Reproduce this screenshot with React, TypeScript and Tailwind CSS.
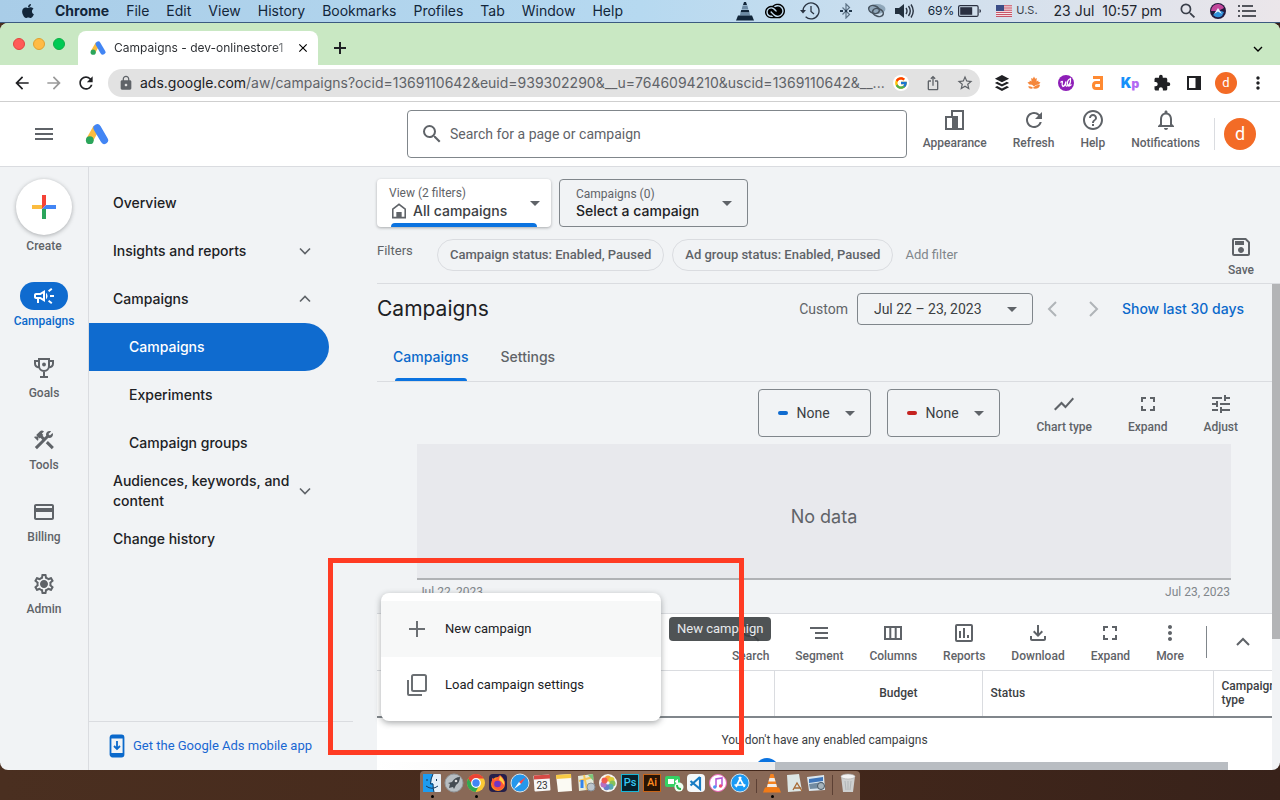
import type { ReactNode } from 'react';
import {
  MdArrowBack,
  MdArrowDropDown,
  MdArrowForward,
  MdClose,
  MdConstruction,
  MdCreditCard,
  MdExtension,
  MdHelpOutline,
  MdIosShare,
  MdLock,
  MdMenu,
  MdMoreVert,
  MdNotificationsNone,
  MdOutlineCampaign,
  MdOutlineFileDownload,
  MdOutlineSave,
  MdOutlineSettings,
  MdRefresh,
  MdSearch,
  MdShowChart,
  MdStarBorder,
  MdTune,
} from 'react-icons/md';
import { FaApple } from 'react-icons/fa';
import { SiAdobecreativecloud, SiBuffer } from 'react-icons/si';
import { FcGoogle } from 'react-icons/fc';

function AdsLogo({ className }: { className: string }) {
  return (
    <svg viewBox="0 0 24 24" className={className} aria-hidden="true">
      <path d="M11.600 5.500 4.600 18" stroke="#fbbc3f" strokeWidth="7" />
      <path d="M12.200 6 19.300 18.200" stroke="#4285f4" strokeWidth="7.600" strokeLinecap="round" />
      <circle cx="4.800" cy="18.200" r="3.900" fill="#2ba55b" />
    </svg>
  );
}

function Chevron({ dir, className }: { dir: 'up' | 'down' | 'left' | 'right'; className: string }) {
  const d = { up: 'M6 15l6-6 6 6', down: 'M6 9l6 6 6-6', left: 'M15 5l-7 7 7 7', right: 'M9 5l7 7-7 7' }[dir];
  return (
    <svg viewBox="0 0 24 24" className={className} fill="none" stroke="currentColor" strokeWidth="2" aria-hidden="true">
      <path d={d} />
    </svg>
  );
}

function ExpandIcon() {
  return (
    <svg viewBox="0 0 24 24" className="size-6" fill="none" stroke="currentColor" strokeWidth="2" aria-hidden="true">
      <path d="M6 10V6h4M14 6h4v4M18 14v4h-4M10 18H6v-4" />
    </svg>
  );
}

function TrophyIcon({ className }: { className: string }) {
  return (
    <svg viewBox="0 0 24 24" className={className} fill="none" stroke="currentColor" strokeWidth="2" aria-hidden="true">
      <path d="M7 3h10v7a5 5 0 0 1-10 0zM7 5H3v2.500Q3 11 7.500 11.500M17 5h4v2.500Q21 11 16.500 11.500M12 15v6M8 21h8" />
      <circle cx="12" cy="8.500" r="1.900" fill="currentColor" stroke="none" />
    </svg>
  );
}

function GearIcon({ className }: { className: string }) {
  return (
    <svg viewBox="0 0 24 24" className={className} aria-hidden="true">
      <MdOutlineSettings size={24} />
      <circle cx="12" cy="12" r="3.200" fill="currentColor" />
    </svg>
  );
}

function Tool({ label, children }: { label: string; children: ReactNode }) {
  return (
    <button type="button" className="flex flex-col items-center gap-[3px] text-xs leading-4 font-medium text-[#5f6368]">
      {children}
      <span>{label}</span>
    </button>
  );
}

function MenuBar() {
  const menus = ['File', 'Edit', 'View', 'History', 'Bookmarks', 'Profiles', 'Tab', 'Window', 'Help'];
  return (
    <header className="flex h-[23px] shrink-0 items-center justify-between border-b border-[#3b5a80] bg-linear-to-r from-[#a9cde8] via-[#b6d9f0] via-50% to-[#ebe6ea] font-[Inter,sans-serif] text-sm text-[#12263a]">
      <nav className="flex items-center gap-[17px] pl-5" aria-label="System menu">
        <FaApple className="mr-0.5 size-4" />
        <button type="button" className="font-bold">Chrome</button>
        {menus.map((m) => (
          <button type="button" key={m}>{m}</button>
        ))}
      </nav>
      <div className="flex items-center pr-6">
        <span className="flex w-[30px] justify-center">
          <svg viewBox="0 0 18 20" className="h-5 w-[18px]" fill="#12263a" aria-hidden="true">
            <path d="M8 1h2l1 3H7z" />
            <path d="M6.600 4.500h4.800l1 4H5.600z" fill="#6d8ba5" />
            <path d="M5.200 9h7.600l.6 2.500H4.600z" />
            <path d="M4.600 11.500h8.800l.8 3H3.800z" fill="#6d8ba5" />
            <path d="M2 14.500h14l2 5H0z" />
          </svg>
        </span>
        <span className="flex w-[30px] justify-center"><SiAdobecreativecloud className="size-5 text-black" /></span>
        <span className="flex w-10 justify-center">
          <svg viewBox="0 0 20 20" className="size-5" fill="none" stroke="#2a3442" strokeWidth="1.300" aria-hidden="true">
            <path d="M3 10a8 8 0 1 1 2.600 5.800M11 5v5.500l3 2.500" />
            <path d="M0 9h6l-3 3.500z" fill="#2a3442" stroke="none" />
          </svg>
        </span>
        <span className="flex w-8 justify-center">
          <svg viewBox="0 0 16 16" className="size-4" fill="none" stroke="#5d7386" strokeWidth="1.200" aria-hidden="true">
            <path d="M4.500 4.500l7 7L8 15V1l3.500 3.500-7 7" />
            <path d="M2 8h3M7 8h2M11 8h3" stroke="#22384c" strokeWidth="2" />
          </svg>
        </span>
        <span className="flex w-7 justify-center">
          <svg viewBox="0 0 20 16" className="h-4 w-5" fill="none" stroke="#46535f" strokeWidth="1.500" aria-hidden="true">
            <ellipse cx="11" cy="6" rx="8.500" ry="5" fill="#8fa7ba" stroke="none" />
            <ellipse cx="8" cy="6.500" rx="5.500" ry="3.800" transform="rotate(20 8 6.500)" />
            <ellipse cx="12" cy="9.500" rx="5.500" ry="3.800" transform="rotate(20 12 9.500)" />
          </svg>
        </span>
        <span className="flex w-[30px] justify-center">
          <svg viewBox="0 0 20 16" className="h-4 w-5" fill="none" stroke="#2a3442" strokeWidth="1.400" aria-hidden="true">
            <path d="M0 5h4l5-4v14l-5-4H0z" fill="#22303e" stroke="none" />
            <path d="M11 5q2 3 0 6M13.500 3q3.500 5 0 10M16 1.500q4.500 6.500 0 13" />
          </svg>
        </span>
        <span className="ml-2 text-xs">69%</span>
        <svg viewBox="0 0 24 12" className="ml-1 h-3 w-6" aria-hidden="true">
          <rect x="0.600" y="0.600" width="19.500" height="10.800" rx="1.500" fill="none" stroke="#2a3040" strokeWidth="1.200" />
          <rect x="2.200" y="2.200" width="12" height="7.600" fill="#2a3040" />
          <path d="M21.500 4v4q1.500-.5 1.500-2t-1.500-2" fill="#2a3040" />
        </svg>
        <svg viewBox="0 0 16 12" className="ml-3.5 h-3 w-4" aria-hidden="true">
          <rect width="16" height="12" fill="#f4e9ec" />
          <path d="M0 .8h16M0 3h16M0 5.200h16M0 7.400h16M0 9.600h16M0 11.600h16" stroke="#c4455a" strokeWidth="1" />
          <rect width="8" height="6" fill="#3b4d86" />
        </svg>
        <span className="ml-1 text-[11px] text-[#3a3f4a]">U.S.</span>
        <span className="ml-4 text-sm text-[#22262e]">23 Jul&nbsp; 10:57 pm</span>
        <MdSearch className="ml-4 size-5 text-[#3a3f4a]" />
        <svg viewBox="0 0 16 16" className="ml-3 size-4" aria-hidden="true">
          <circle cx="8" cy="8" r="8" fill="#231a3d" />
          <path d="M1 8a7 7 0 0 1 8-7q4 1 5 4L8 8z" fill="#c2469b" />
          <path d="M3 12q4 4 9 1l2-4-6-2z" fill="#2f8fd8" />
          <path d="M4 11l4-6 4 6-4-2.500z" fill="#e8f4ff" />
        </svg>
        <svg viewBox="0 0 18 12" className="ml-3 h-3 w-[18px]" stroke="#22262e" strokeWidth="1.600" aria-hidden="true">
          <path d="M0 1h2M4 1h11M0 6h2M4 6h14M0 11h2M4 11h14" />
        </svg>
      </div>
    </header>
  );
}

function TabStrip() {
  return (
    <div className="flex h-[42px] items-end bg-[#c9e8c3] font-[Inter,sans-serif]">
      <div className="mb-[15px] flex gap-2 pl-[13px]">
        <span className="size-3 rounded-full border border-[#e2453f] bg-[#ff5b57]" />
        <span className="size-3 rounded-full border border-[#e0a030] bg-[#ffbb44]" />
        <span className="size-3 rounded-full border border-[#0fae45] bg-[#00ca53]" />
      </div>
      <div className="ml-[13px] flex h-[34px] w-60 items-center rounded-t-lg bg-white pr-2 pl-3">
        <AdsLogo className="size-4" />
        <span className="ml-2 flex-1 bg-linear-to-r from-[#2a2d31] from-90% to-[#c0c2c5] bg-clip-text text-xs whitespace-nowrap text-transparent">
          Campaigns - dev-onlinestore1
        </span>
        <button type="button" aria-label="Close tab" className="ml-1.5"><MdClose className="size-3.5" /></button>
      </div>
      <button type="button" aria-label="New tab" className="mb-[10px] ml-[15px]">
        <svg viewBox="0 0 14 14" className="size-3.5" stroke="#1f2124" strokeWidth="2" aria-hidden="true"><path d="M7 1v12M1 7h12" /></svg>
      </button>
      <button type="button" aria-label="Search tabs" className="mr-3.5 mb-2 ml-auto"><Chevron dir="down" className="size-4" /></button>
    </div>
  );
}

function Slot({ label, children }: { label: string; children: ReactNode }) {
  return <button type="button" aria-label={label} className="flex w-8 shrink-0 items-center justify-center">{children}</button>;
}

function AddressBar() {
  return (
    <div className="flex h-[37px] items-center border-b border-[#cfcfcf] bg-white px-1.5 font-[Inter,sans-serif] text-[#202124]">
      <Slot label="Back"><MdArrowBack className="size-5" /></Slot>
      <Slot label="Forward"><MdArrowForward className="size-5 text-[#9a9a9a]" /></Slot>
      <Slot label="Reload"><MdRefresh className="size-5" /></Slot>
      <div className="ml-1.5 flex h-7 min-w-0 flex-1 items-center rounded-full bg-[#e2e2e2] pr-0.5 pl-2.5 text-[#5f6368]">
        <MdLock className="size-4 shrink-0" />
        <span className="ml-1.5 flex-1 text-sm whitespace-nowrap">
          <span className="text-[#202124]">ads.google.com</span>/aw/campaigns?ocid=1369110642&amp;euid=939302290&amp;__u=7646094210&amp;uscid=1369110642&amp;__...
        </span>
        <Slot label="Google"><span className="flex size-4 items-center justify-center rounded-full bg-white"><FcGoogle className="size-3.5" /></span></Slot>
        <Slot label="Share"><MdIosShare className="size-4" /></Slot>
        <Slot label="Bookmark"><MdStarBorder className="size-[18px]" /></Slot>
      </div>
      <div className="ml-1.5 flex">
        <Slot label="Buffer"><SiBuffer className="size-4" /></Slot>
        <Slot label="Maple">
          <svg viewBox="0 0 16 16" className="size-4" fill="#f5873c" aria-hidden="true">
            <path d="M8 1.500l1.200 2.300 1.600-.8-.3 3.600 1.800-1.100.2 1.500 2 .3-1.700 2.200-3 .5L8 11.500 6 9.800 3.200 9.500 1.500 7.300l2-.3.2-1.500L5.500 6.600 5.200 3l1.600.8z" />
            <path d="M2 11.500q3-1 5 1.300 3-3.300 7-3-.5 4-5 4-1.500 0-2-.8-1 1-2 .7-2 0-3-2.200" />
          </svg>
        </Slot>
        <Slot label="Writer">
          <svg viewBox="0 0 16 16" className="size-4" aria-hidden="true">
            <circle cx="8" cy="8" r="8" fill="#8e1fb8" />
            <path d="M2.500 7.500q2.500-2.500 1.800 0t.7 4q2-.5 3-5-.8 5 1 4.500Q13 10 12.500 3.500 9 5 9.500 9t4 .5" fill="none" stroke="#fff" strokeWidth="1.200" />
          </svg>
        </Slot>
        <Slot label="Ahrefs">
          <svg viewBox="0 0 14 16" className="h-4 w-3.5" fill="none" stroke="#ff8a32" strokeWidth="3" aria-hidden="true">
            <path d="M2 2.500h8.500V15M10.500 7.500H5Q2.500 7.500 2.500 10.500T5 13.500h5.500" />
          </svg>
        </Slot>
        <Slot label="Keywords"><span className="text-sm leading-4 font-black text-[#1690fa]">K<span className="text-xs text-[#b267f2]">p</span></span></Slot>
        <Slot label="Extensions"><MdExtension className="size-[18px]" /></Slot>
        <Slot label="Side panel">
          <svg viewBox="0 0 16 16" className="size-4" aria-hidden="true"><path d="M2 2h12v12H2z" fill="none" stroke="#202124" strokeWidth="2" /><path d="M9.500 2H14v12H9.500z" fill="#202124" /></svg>
        </Slot>
        <Slot label="Profile"><span className="flex size-[22px] items-center justify-center rounded-full bg-[#f36b26] font-[Roboto,sans-serif] text-[13px] text-white">d</span></Slot>
        <Slot label="Chrome menu"><MdMoreVert className="size-5" /></Slot>
      </div>
    </div>
  );
}

function AppHeader() {
  return (
    <div className="flex h-[65px] items-center border-b border-[#dadce0] bg-white text-[#5f6368]">
      <div className="flex w-[407px] items-center">
        <button type="button" aria-label="Main menu" className="ml-8"><MdMenu className="size-6" /></button>
        <AdsLogo className="ml-[29px] size-6" />
      </div>
      <label className="flex h-12 w-[500px] items-center rounded border border-[#80868b] pl-3">
        <MdSearch className="size-6" />
        <input type="search" aria-label="Search" placeholder="Search for a page or campaign" className="ml-1.5 flex-1 bg-transparent text-sm outline-none placeholder:text-[#5f6368]" />
      </label>
      <div className="ml-auto flex items-center gap-3.5 pr-6">
        <div className="flex gap-[26px] pb-[9px]">
          <Tool label="Appearance">
            <svg viewBox="0 0 24 24" className="size-6" fill="none" stroke="currentColor" strokeWidth="2" aria-hidden="true">
              <path d="M9 9V3h11v18H3V9h6" /><path d="M9 8h6v13H9z" fill="currentColor" stroke="none" />
            </svg>
          </Tool>
          <Tool label="Refresh"><MdRefresh className="size-6" /></Tool>
          <Tool label="Help"><MdHelpOutline className="size-6" /></Tool>
          <Tool label="Notifications"><MdNotificationsNone className="size-6" /></Tool>
        </div>
        <div className="flex items-center border-l border-[#dadce0] pl-[9px]">
          <button type="button" aria-label="Account" className="size-8 rounded-full bg-[#f36b26] text-lg leading-8 text-white">d</button>
        </div>
      </div>
    </div>
  );
}

function Rail() {
  const items = [
    { label: 'Campaigns', Icon: MdOutlineCampaign, active: true },
    { label: 'Goals', Icon: TrophyIcon, active: false },
    { label: 'Tools', Icon: MdConstruction, active: false },
    { label: 'Billing', Icon: MdCreditCard, active: false },
    { label: 'Admin', Icon: GearIcon, active: false },
  ];
  return (
    <nav aria-label="Sections" className="flex w-[89px] shrink-0 flex-col items-center border-r border-[#dadce0] pt-3 text-xs leading-[18px] font-medium text-[#5f6368]">
      <button type="button" className="mb-[27px] flex flex-col items-center gap-0.5">
        <span className="flex size-14 items-center justify-center rounded-full bg-white shadow-[0_1px_4px_rgba(60,64,67,0.4)]">
          <svg viewBox="0 0 24 24" className="size-6" aria-hidden="true">
            <path d="M10 0h4v10l-4 4z" fill="#f44336" />
            <path d="M0 10h10v4H0z" fill="#fbbc3f" />
            <path d="M14 10h10v4H10z" fill="#4285f4" />
            <path d="M10 14h4v10h-4z" fill="#2ba55b" />
          </svg>
        </span>
        <span>Create</span>
      </button>
      <div className="flex flex-col gap-6">
        {items.map(({ label, Icon, active }) => (
          <a key={label} href={'#' + label} className={active ? 'flex flex-col items-center gap-0.5 text-[#0b69cb]' : 'flex flex-col items-center gap-0.5'}>
            <span className={active ? 'flex h-7 w-12 items-center justify-center rounded-full bg-[#0f6bcf] text-white' : 'flex h-7 items-center'}>
              <Icon className="size-6" />
            </span>
            <span>{label}</span>
          </a>
        ))}
      </div>
    </nav>
  );
}

function SideNav() {
  const row = 'flex h-12 items-center justify-between pr-3 pl-6';
  const sub = 'flex h-12 items-center pl-10';
  return (
    <aside className="flex w-[264px] shrink-0 flex-col pt-3 font-[Inter,sans-serif] text-sm leading-5 font-medium text-[#202124]">
      <nav aria-label="Pages" className="w-60">
        <a href="#overview" className={row}>Overview</a>
        <a href="#insights" className={row}>Insights and reports<Chevron dir="down" className="size-6 p-0.5 text-[#5f6368]" /></a>
        <a href="#campaigns" className={row}>Campaigns<Chevron dir="up" className="size-6 p-0.5 text-[#5f6368]" /></a>
        <a href="#all" className="flex h-12 items-center rounded-r-full bg-[#0f6bcf] pl-10 text-white">Campaigns</a>
        <a href="#experiments" className={sub}>Experiments</a>
        <a href="#groups" className={sub}>Campaign groups</a>
        <a href="#audiences" className={row}><span>Audiences, keywords, and content</span><Chevron dir="down" className="size-6 shrink-0 p-0.5 text-[#5f6368]" /></a>
        <a href="#history" className={row}>Change history</a>
      </nav>
      <a href="#mobile" className="mt-auto flex h-[49px] items-center border-t border-[#dadce0] pl-5 font-[Roboto,sans-serif] text-[13px] font-normal text-[#1967d2]">
        <svg viewBox="0 0 16 24" className="h-6 w-4" fill="none" stroke="#0b69cb" strokeWidth="1.800" aria-hidden="true">
          <rect x="1.500" y="1.500" width="13" height="21" rx="2" />
          <path d="M1.500 3h13M1.500 20.500h13" strokeWidth="3" />
          <path d="M8 7v8M5 12l3 3 3-3" />
        </svg>
        <span className="ml-2">Get the Google Ads mobile app</span>
      </a>
    </aside>
  );
}

function FilterBar() {
  const chip = 'h-8 rounded-full border border-[#dadce0] px-3 text-[13px] font-medium';
  return (
    <section className="flex items-end border-b border-[#dadce0] pt-3 text-[#5f6368]">
      <div className="flex-1 pb-3">
        <div className="flex gap-2">
          <div className="relative flex h-12 w-[174px] items-center rounded bg-white pr-1 pl-3 shadow-[0_1px_3px_rgba(60,64,67,0.4)]">
            <label className="flex-1 text-xs leading-4">
              View (2 filters)
              <span className="flex items-center gap-1.5">
                <svg viewBox="0 0 18 18" className="ml-0.5 size-4" fill="none" stroke="currentColor" strokeWidth="1.800" aria-hidden="true">
                  <path d="M2 16.500V7l7-5.500L16 7v9.500z" /><path d="M6 10h6v6.500H6z" fill="currentColor" stroke="none" />
                </svg>
                <select className="w-[104px] appearance-none bg-transparent font-[Inter,sans-serif] text-sm leading-5 font-medium text-[#3c4043]"><option>All campaigns</option></select>
              </span>
            </label>
            <MdArrowDropDown className="size-6" />
            <span className="absolute inset-x-3.5 bottom-0 h-1 rounded-t bg-[#0b73e0]" />
          </div>
          <div className="flex h-12 w-[189px] items-center rounded border border-[#80868b] pr-2 pl-4">
            <label className="flex-1 text-xs leading-4">
              Campaigns (0)
              <select className="block w-full appearance-none bg-transparent font-[Inter,sans-serif] text-sm leading-[18px] font-medium text-[#202124]"><option>Select a campaign</option></select>
            </label>
            <MdArrowDropDown className="size-6" />
          </div>
        </div>
        <div className="mt-3 flex items-center text-[13px]">
          <span className="w-[60px] pb-2">Filters</span>
          <button type="button" className={chip}>Campaign status: Enabled, Paused</button>
          <button type="button" className={'ml-2 ' + chip}>Ad group status: Enabled, Paused</button>
          <button type="button" className="ml-3 text-[#80868b]">Add filter</button>
        </div>
      </div>
      <div className="pr-[26px] pb-[5px]"><Tool label="Save"><MdOutlineSave className="size-6" /></Tool></div>
    </section>
  );
}

function SeriesSelect({ name, swatch }: { name: string; swatch: string }) {
  return (
    <label className="flex h-12 w-[113px] items-center rounded border border-[#80868b] pr-2 pl-[19px] text-[#5f6368]">
      <span className={swatch} />
      <select aria-label={name} className="ml-2 w-11 appearance-none bg-transparent text-sm text-[#3c4043]"><option>None</option></select>
      <MdArrowDropDown className="-ml-0.5 size-6 shrink-0" />
    </label>
  );
}

function ReportHead() {
  return (
    <>
      <div className="mt-[9px] flex h-8 items-center pr-7 text-sm text-[#5f6368]">
        <h1 className="flex-1 font-[Inter,sans-serif] text-[21px] text-[#202124]">Campaigns</h1>
        <label htmlFor="range">Custom</label>
        <div className="ml-[9px] flex h-8 w-44 items-center rounded border border-[#80868b] pr-2 pl-4">
          <select id="range" className="flex-1 appearance-none bg-transparent text-[#3c4043]"><option>Jul 22 – 23, 2023</option></select>
          <MdArrowDropDown className="size-6" />
        </div>
        <button type="button" aria-label="Previous period" className="flex w-10 justify-center text-[#b0b4b8]"><Chevron dir="left" className="size-6" /></button>
        <button type="button" aria-label="Next period" className="flex w-10 justify-center text-[#b0b4b8]"><Chevron dir="right" className="size-6" /></button>
        <button type="button" className="ml-[9px] font-[Inter,sans-serif] font-medium text-[#0b69cb]">Show last 30 days</button>
      </div>
      <div className="mt-2 flex h-[49px] gap-8 border-b border-[#dadce0] pl-4 font-[Inter,sans-serif] text-sm font-medium text-[#5f6368]">
        <button type="button" className="relative text-[#0b69cb]">
          Campaigns
          <span className="absolute inset-x-0.5 bottom-0 h-[3px] rounded-t bg-[#0b73e0]" />
        </button>
        <button type="button">Settings</button>
      </div>
    </>
  );
}

function Chart() {
  return (
    <>
      <div className="mt-[7px] flex items-center justify-end gap-9 pr-[34px]">
        <div className="flex gap-4">
          <SeriesSelect name="First metric" swatch="h-1 w-2.5 rounded-full bg-[#0f6bcf]" />
          <SeriesSelect name="Second metric" swatch="h-1 w-2.5 rounded-full bg-[#c5221f]" />
        </div>
        <Tool label="Chart type"><MdShowChart className="size-6" /></Tool>
        <Tool label="Expand"><ExpandIcon /></Tool>
        <Tool label="Adjust"><MdTune className="size-6" /></Tool>
      </div>
      <div className="mt-[7px] mr-[41px] ml-10">
        <div className="flex h-[136px] items-center justify-center border-b-2 border-[#b0b2b5] bg-[#e8e9ed] pt-3 font-[Inter,sans-serif] text-lg text-[#5f6368]">No data</div>
        <div className="mt-1 flex justify-between px-px text-xs leading-4 text-[#80868b]"><span>Jul 22, 2023</span><span>Jul 23, 2023</span></div>
      </div>
    </>
  );
}

function CampaignTable() {
  return (
    <section className="mt-[13px] flex min-h-0 flex-1 flex-col overflow-hidden border-t border-[#dadce0] bg-white text-[#5f6368]">
      <div className="flex h-14 shrink-0 items-center justify-end gap-[26px] pr-[17px]">
        <Tool label="Search"><MdSearch className="size-6" /></Tool>
        <Tool label="Segment">
          <svg viewBox="0 0 24 24" className="size-6" stroke="currentColor" strokeWidth="2" aria-hidden="true"><path d="M3 7h18M8 12h13M8 17h13" /></svg>
        </Tool>
        <Tool label="Columns">
          <svg viewBox="0 0 24 24" className="size-6" fill="none" stroke="currentColor" strokeWidth="2" aria-hidden="true"><path d="M4 6h16v12H4zM9.300 6v12M14.700 6v12" /></svg>
        </Tool>
        <Tool label="Reports">
          <svg viewBox="0 0 24 24" className="size-6" fill="none" stroke="currentColor" strokeWidth="2" aria-hidden="true"><rect x="4" y="4" width="16" height="16" rx="1" /><path d="M8 10v7M12 7v10M16 14v3" /></svg>
        </Tool>
        <Tool label="Download"><MdOutlineFileDownload className="size-6" /></Tool>
        <Tool label="Expand"><ExpandIcon /></Tool>
        <Tool label="More"><MdMoreVert className="size-6" /></Tool>
        <div className="-ml-1 flex items-center gap-6">
          <span className="h-8 border-l border-[#80868b]" />
          <button type="button" aria-label="Collapse"><Chevron dir="up" className="size-6" /></button>
        </div>
      </div>
      <table className="w-full table-fixed border-t border-[#dadce0] text-xs leading-[14px] text-[#3c4043]">
        <thead>
          <tr className="h-[46px] border-b-2 border-[#80868b] text-left">
            <th className="w-[397px] border-r border-[#dadce0]" aria-label="Campaign" />
            <th className="w-[208px] border-r border-[#dadce0] pr-16 text-right font-medium">Budget</th>
            <th className="border-r border-[#dadce0] pl-2 font-medium">Status</th>
            <th className="w-[59px] pl-2 font-medium">Campaign type</th>
          </tr>
        </thead>
        <tbody>
          <tr><td colSpan={4} className="h-[45px] text-center">You don't have any enabled campaigns</td></tr>
        </tbody>
      </table>
      <div className="relative mt-auto flex h-2.5 shrink-0 pr-11">
        <span className="w-[398px] bg-linear-to-r from-white to-[#ececed]" />
        <span className="flex-1 bg-[#b9bdc2]" />
        <span className="absolute -top-1 left-[378px] flex h-1 w-6 overflow-hidden">
          <span className="size-6 shrink-0 rounded-full bg-[#0b73e0]" />
        </span>
      </div>
    </section>
  );
}

function Overlays() {
  return (
    <>
      <div role="menu" className="absolute top-[426px] left-[381px] w-[280px] rounded-lg bg-white py-2 text-[13px] text-[#202124] shadow-[0_2px_6px_rgba(60,64,67,0.45)]">
        <button type="button" role="menuitem" className="flex h-14 w-full items-center gap-4 bg-[#f7f8f8] pl-6">
          <svg viewBox="0 0 24 24" className="size-6" stroke="#6b6f73" strokeWidth="2" aria-hidden="true"><path d="M12 4v16M4 12h16" /></svg>
          New campaign
        </button>
        <button type="button" role="menuitem" className="flex h-14 w-full items-center gap-4 pl-6">
          <svg viewBox="0 0 24 24" className="size-6" fill="none" stroke="#6b6f73" strokeWidth="2" aria-hidden="true">
            <rect x="7" y="2" width="14" height="16" rx="1.500" /><path d="M3 7v14q0 1 1 1h13" />
          </svg>
          Load campaign settings
        </button>
      </div>
      <div role="tooltip" className="absolute top-[450px] left-[669px] rounded bg-[#3c4043]/90 px-2 text-[13px] leading-6 text-[#e8eaed]">New campaign</div>
      <div className="pointer-events-none absolute top-[391px] left-[328px] h-[197px] w-[416px] border-[5px] border-[#ff3b23]" />
    </>
  );
}

function Dock() {
  const i = 'size-5';
  return (
    <footer className="flex h-[30px] shrink-0 items-end justify-center">
      <div className="flex h-[29px] items-start rounded-t bg-[#896957] px-px pt-0.5">
        <DockItem running><svg viewBox="0 0 20 20" className={i}><rect x="1" y="1" width="18" height="18" rx="1" fill="#e5eff8" /><path d="M1 1h10q-2 5-2 9h2l1 9H1z" fill="#1d9cf0" /><path d="M5 6v2M14.500 6v2M4 13q6 4.500 12 0M11 1Q8.500 6 8.500 11H11q0 5 1 8" fill="none" stroke="#153b60" /></svg></DockItem>
        <DockItem><svg viewBox="0 0 20 20" className={i}><circle cx="10" cy="10" r="9" fill="#b8bec2" stroke="#93999d" /><path d="M16 4q-5 0-8 5l-4 1 2 1-1 4 4-1 1 2 2-4q4-3 4-8" fill="#454c52" /><circle cx="12" cy="8" r="1.300" fill="#ddd" /></svg></DockItem>
        <DockItem running><svg viewBox="0 0 20 20" className={i}><circle cx="10" cy="10" r="9" fill="#fcc934" /><path d="M2.200 5.500a9 9 0 0 1 15.600 0H10L6 12z" fill="#ea4335" /><path d="M2.200 5.500A9 9 0 0 0 9.500 19l4-7-7 0z" fill="#30a853" /><circle cx="10" cy="10" r="4.300" fill="#4285f4" stroke="#fff" strokeWidth="1.200" /></svg></DockItem>
        <DockItem><svg viewBox="0 0 20 20" className={i}><rect x="1" y="1" width="18" height="18" rx="4" fill="#25204b" /><circle cx="10" cy="11" r="7" fill="#ff8c1d" /><path d="M4 5q2 1 3 2 3-3 5-5 5 4 5 9-2 6-7 6-5-1-6-6z" fill="#ff5838" /><path d="M12 3q5 4 4 9-2-4-5-5z" fill="#ffd23c" /><circle cx="9.500" cy="11" r="3.300" fill="#7136c6" /></svg></DockItem>
        <DockItem><svg viewBox="0 0 20 20" className={i}><circle cx="10" cy="10" r="9" fill="#2597ec" stroke="#d8e4ec" /><path d="M16 4l-5 7-2-2z" fill="#f44" /><path d="M4 16l5-7 2 2z" fill="#fff" /></svg></DockItem>
        <DockItem><svg viewBox="0 0 20 20" className={i}><rect x="2" y="2" width="16" height="16" rx="1" fill="#f7f7f7" transform="rotate(-4 10 10)" /><path d="M2 2.500l16-1v4l-16 1z" fill="#d64a45" /><text x="10" y="15.500" fontSize="10" textAnchor="middle" fill="#333" fontFamily="Roboto">23</text></svg></DockItem>
        <DockItem><svg viewBox="0 0 20 20" className={i}><path d="M2 2l15-1 1 17-14 1z" fill="#fbfaf3" /><path d="M2 2l15-1v4L2.300 6z" fill="#f7ca45" /></svg></DockItem>
        <DockItem><svg viewBox="0 0 20 20" className={i}><path d="M2 3l15-2 1 15-15 2z" fill="#e5eadb" /><path d="M3 8l14-4M8 2l3 15" stroke="#f4c65b" strokeWidth="2" /><path d="M12 2l5-1 .5 7z" fill="#7cc67a" /><path d="M6 7v8" stroke="#3384ec" strokeWidth="3" /><circle cx="15" cy="14" r="4" fill="#bcc5cd" stroke="#858f98" /></svg></DockItem>
        <DockItem><svg viewBox="0 0 20 20" className={i}><circle cx="10" cy="10" r="9" fill="#f5f5f3" /><circle cx="10" cy="5.500" r="3" fill="#f8a33a" /><circle cx="13.500" cy="7" r="3" fill="#d9cf3b" /><circle cx="14.500" cy="10.500" r="3" fill="#84c15c" /><circle cx="12.500" cy="13.800" r="3" fill="#56aab1" /><circle cx="8.500" cy="14.200" r="3" fill="#687fca" /><circle cx="5.500" cy="11.500" r="3" fill="#b66ec2" /><circle cx="6.500" cy="7.500" r="3" fill="#ef5a51" /></svg></DockItem>
        <DockItem><span className="flex size-[18px] items-center justify-center border border-[#18b6d8] bg-[#06202c] text-[11px] leading-4 font-medium text-[#38c8f2]">Ps</span></DockItem>
        <DockItem><span className="flex size-[18px] items-center justify-center border border-[#c86418] bg-[#291405] text-[11px] leading-4 font-medium text-[#ff8b22]">Ai</span></DockItem>
        <DockItem><svg viewBox="0 0 20 20" className={i}><rect x="1" y="3" width="15" height="11" rx="2" fill="#34d163" /><path d="M4 6h6v5H4zM11 8l3-2v5l-3-2z" fill="#fff" /><circle cx="15" cy="14" r="4.500" fill="#edfff1" /><path d="M13 12q0 4 4 4" fill="none" stroke="#24b950" strokeWidth="2" /></svg></DockItem>
        <DockItem><svg viewBox="0 0 20 20" className={i}><rect x="1" y="1" width="18" height="18" rx="4" fill="#f5f8fa" /><path d="M14 4v12L4.500 8M14 4L4.500 12.500" fill="none" stroke="#167bc4" strokeWidth="2.200" /></svg></DockItem>
        <DockItem><svg viewBox="0 0 20 20" className={i}><circle cx="10" cy="10" r="8.500" fill="#fff" stroke="#ed66b8" /><path d="M8 14V6l6-1v8" fill="none" stroke="#b554d4" strokeWidth="1.500" /><circle cx="6.800" cy="14" r="1.800" fill="#4f95f5" /><circle cx="12.600" cy="13" r="1.800" fill="#f14b78" /></svg></DockItem>
        <DockItem><svg viewBox="0 0 20 20" className={i}><circle cx="10" cy="10" r="9" fill="#1a9af5" stroke="#cfe5f3" /><path d="M11 4L6 14M9 4l5.500 10M4.500 12h11" stroke="#fff" strokeWidth="1.700" /></svg></DockItem>
        <span className="mt-1.5 mr-1 ml-[5px] h-3.5 border-l border-[#5c4034]" />
        <DockItem running><svg viewBox="0 0 20 20" className={i}><path d="M8.500 1h3l4 14h-11z" fill="#f58220" /><path d="M7.500 5h5l1 3.500h-7zM5.800 11h8.400l.8 3H5z" fill="#f1eeea" /><path d="M3 14.500h14l2 5H1z" fill="#f07b18" /></svg></DockItem>
        <DockItem><svg viewBox="0 0 20 20" className={i}><path d="M3 2l12-1 3 17-14 1z" fill="#dce6e5" /><path d="M9 17l4-7 5 8M10 15h7" fill="none" stroke="#a76a35" strokeWidth="1.300" /></svg></DockItem>
        <DockItem><svg viewBox="0 0 20 20" className={i}><path d="M1 4l17-2 1 15-16 1z" fill="#dae7f0" /><path d="M3 6l14-2v4L3 10z" fill="#3d75ba" /><path d="M3 11l14-2v6l-13 1z" fill="#728ca2" /><circle cx="15" cy="13" r="3.500" fill="#a6b4bc" stroke="#495863" /></svg></DockItem>
        <span className="mt-0.5 mr-1 ml-[5px] h-5 border-l border-[#5c4034]" />
        <DockItem><svg viewBox="0 0 20 20" className={i}><path d="M3 3h14l-2 16H5z" fill="#ced0d0" /><ellipse cx="10" cy="3.500" rx="7" ry="2.500" fill="#f2f2f2" stroke="#aaa" strokeWidth=".6" /><path d="M7 8l1 9M10 8v9M13 8l-1 9" stroke="#aaafb0" strokeWidth=".8" /></svg></DockItem>
      </div>
    </footer>
  );
}

function DockItem({ running, children }: { running?: boolean; children: ReactNode }) {
  return (
    <span className="flex w-[22px] flex-col items-center gap-0.5">
      <span className="flex size-5 items-center justify-center">{children}</span>
      {running && <span className="size-[3px] rounded-full bg-black" />}
    </span>
  );
}

export default function App() {
  return (
    <div className="flex h-screen flex-col overflow-hidden bg-linear-to-r from-[#4a2f20] via-[#46291b] to-[#38221a] font-[Roboto,sans-serif]">
      <MenuBar />
      <div className="flex min-h-0 flex-1 flex-col overflow-hidden rounded-lg bg-[#f1f3f5]">
        <TabStrip />
        <AddressBar />
        <AppHeader />
        <div className="relative flex min-h-0 flex-1">
          <Rail />
          <SideNav />
          <main className="flex min-w-0 flex-1 flex-col pl-6">
            <FilterBar />
            <div className="flex min-h-0 flex-1">
              <div className="flex min-w-0 flex-1 flex-col">
                <ReportHead />
                <Chart />
                <CampaignTable />
              </div>
              <div className="w-2"><div className="h-[73%] bg-[#b3b4b6]" /></div>
            </div>
          </main>
          <Overlays />
        </div>
      </div>
      <Dock />
    </div>
  );
}
